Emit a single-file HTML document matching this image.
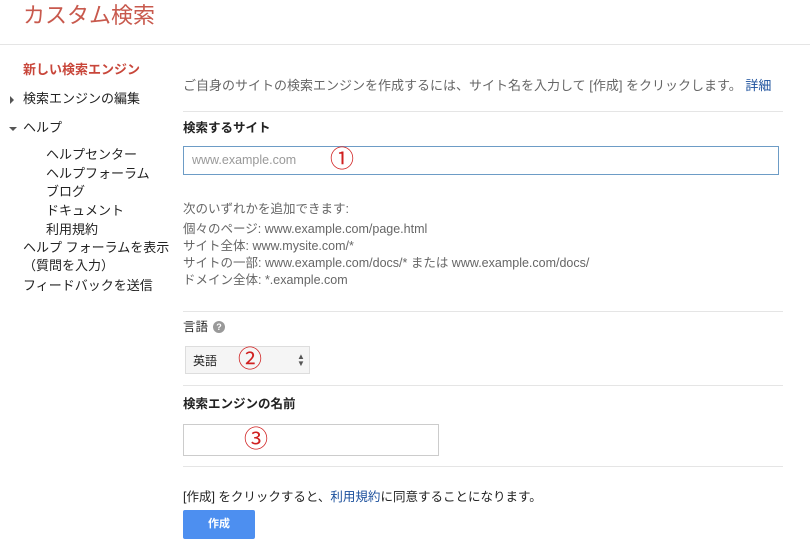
<!DOCTYPE html>
<html><head><meta charset="utf-8"><style>
body{margin:0;width:810px;height:547px;background:#fff;font-family:"Liberation Sans","Noto Sans CJK JP",sans-serif;position:relative;overflow:hidden;color:#222}
.a{position:absolute;white-space:nowrap}
.t{font-size:13px;line-height:16px}
.g{color:#666;font-size:12.5px}
.hr{position:absolute;height:1px;background:#e5e5e5;left:183px;width:600px}
.red{color:#d02020;font-size:24px;line-height:26px}
</style></head><body>
<div class="a" style="left:23px;top:2px;font-size:22px;color:#c8594d;line-height:28px">カスタム検索</div>
<div style="position:absolute;left:0;top:44px;width:810px;height:1px;background:#e5e5e5"></div>

<div class="a t" style="left:23px;top:62px;color:#c8463a;font-weight:bold">新しい検索エンジン</div>
<div class="a" style="left:10px;top:96px;width:0;height:0;border-top:4px solid transparent;border-bottom:4px solid transparent;border-left:4px solid #555"></div>
<div class="a t" style="left:23px;top:91px">検索エンジンの編集</div>
<div class="a" style="left:9px;top:127px;width:0;height:0;border-left:4px solid transparent;border-right:4px solid transparent;border-top:4px solid #555"></div>
<div class="a t" style="left:23px;top:120px">ヘルプ</div>
<div class="a t" style="left:46px;top:147px">ヘルプセンター</div>
<div class="a t" style="left:46px;top:166px">ヘルプフォーラム</div>
<div class="a t" style="left:46px;top:184px">ブログ</div>
<div class="a t" style="left:46px;top:203px">ドキュメント</div>
<div class="a t" style="left:46px;top:222px">利用規約</div>
<div class="a t" style="left:23px;top:240px">ヘルプ フォーラムを表示</div>
<div class="a t" style="left:23px;top:258px">（質問を入力）</div>
<div class="a t" style="left:23px;top:278px">フィードバックを送信</div>

<div class="a g" style="left:183px;top:75px;font-size:13px">ご自身のサイトの検索エンジンを作成するには、サイト名を入力して [作成] をクリックします。 <span style="color:#1a4f9c">詳細</span></div>
<div class="hr" style="top:111px"></div>
<div class="a t" style="left:183px;top:120px;font-weight:bold;font-size:12.5px">検索するサイト</div>
<div class="a" style="left:183px;top:146px;width:596px;height:29px;border:1px solid #6d9cc6;box-sizing:border-box"></div>
<div class="a" style="left:192px;top:153px;font-size:12.5px;color:#999">www.example.com</div>
<div class="a red" style="left:330px;top:147px">①</div>
<div class="a g" style="left:183px;top:198px">次のいずれかを追加できます:</div>
<div class="a g" style="left:183px;top:221px;line-height:17px">個々のページ: www.example.com/page.html<br>サイト全体: www.mysite.com/*<br>サイトの一部: www.example.com/docs/* または www.example.com/docs/<br>ドメイン全体: *.example.com</div>
<div class="hr" style="top:311px"></div>
<div class="a t" style="left:183px;top:319px;font-size:12.5px">言語</div>
<div class="a" style="left:213px;top:321px;width:12px;height:12px;border-radius:50%;background:#999;color:#fff;font-size:9px;line-height:12px;text-align:center;font-weight:bold">?</div>
<div class="a" style="left:185px;top:346px;width:125px;height:28px;background:#f5f5f5;border:1px solid #ddd;box-sizing:border-box"></div>
<div class="a" style="left:193px;top:352px;font-size:12px">英語</div>
<div class="a red" style="left:238px;top:347px">②</div>
<div class="a" style="left:297px;top:353px;font-size:8px;line-height:7px;color:#555">▲<br>▼</div>
<div class="hr" style="top:385px"></div>
<div class="a t" style="left:183px;top:396px;font-weight:bold;font-size:12.5px">検索エンジンの名前</div>
<div class="a" style="left:183px;top:424px;width:256px;height:32px;border:1px solid #ccc;box-sizing:border-box"></div>
<div class="a red" style="left:244px;top:427px">③</div>
<div class="hr" style="top:466px"></div>
<div class="a" style="left:183px;top:486px;font-size:12.5px">[作成] をクリックすると、<span style="color:#1a4f9c">利用規約</span>に同意することになります。</div>
<div class="a" style="left:183px;top:510px;width:72px;height:29px;background:#4d8ff0;border-radius:2px;color:#fff;font-weight:bold;font-size:11px;line-height:29px;text-align:center">作成</div>
</body></html>
